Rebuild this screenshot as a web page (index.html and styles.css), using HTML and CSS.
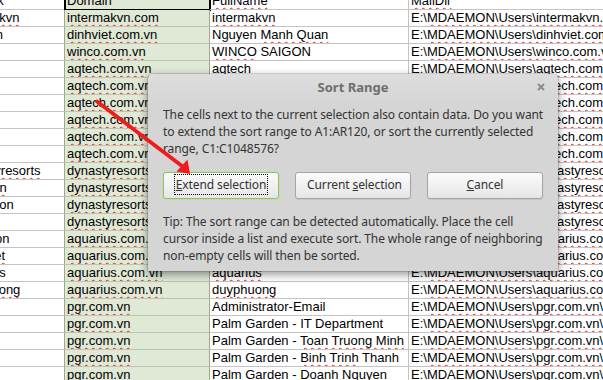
FILE: index.html
```html
<!DOCTYPE html>
<html lang="en">
<head>
    <meta charset="UTF-8">
    <title>Sort Range</title>
    <link rel="stylesheet" href="styles.css">
</head>
<body>
    <div class="sheet">
        <div class="cell a">Network</div><div class="cell b cur">Domain</div><div class="cell c"><span class="sp">FullName</span></div><div class="cell d"><span class="sp">MailDir</span></div>

        <div class="cell a"><span class="sp">intermakvn</span></div><div class="cell b"><span class="sp">intermakvn.com</span></div><div class="cell c"><span class="sp">intermakvn</span></div><div class="cell d">E:\<span class="sp">MDAEMON\Users\intermakvn.com\intermakvn\</span></div>
        <div class="cell a">nmquan</div><div class="cell b"><span class="sp">dinhviet.com.vn</span></div><div class="cell c">Nguyen <span class="sp">Manh Quan</span></div><div class="cell d">E:\<span class="sp">MDAEMON\Users\dinhviet.com.vn\nmquan\</span></div>
        <div class="cell a"></div><div class="cell b"><span class="sp">winco.com.vn</span></div><div class="cell c"><span class="sp">WINCO</span> SAIGON</div><div class="cell d">E:\<span class="sp">MDAEMON\Users\winco.com.vn\winco\</span></div>
        <div class="cell a"></div><div class="cell b"><span class="sp">aqtech.com.vn</span></div><div class="cell c"><span class="sp">aqtech</span></div><div class="cell d">E:\<span class="sp">MDAEMON\Users\aqtech.com.vn\aqtech\</span></div>
        <div class="cell a"></div><div class="cell b"><span class="sp">aqtech.com.vn</span></div><div class="cell c">Sales</div><div class="cell d">E:\<span class="sp">MDAEMON\Users\aqtech.com.vn\sales\</span></div>
        <div class="cell a"></div><div class="cell b"><span class="sp">aqtech.com.vn</span></div><div class="cell c">Support</div><div class="cell d">E:\<span class="sp">MDAEMON\Users\aqtech.com.vn\support\</span></div>
        <div class="cell a"></div><div class="cell b"><span class="sp">aqtech.com.vn</span></div><div class="cell c">Accounting</div><div class="cell d">E:\<span class="sp">MDAEMON\Users\aqtech.com.vn\ketoan\</span></div>
        <div class="cell a"></div><div class="cell b"><span class="sp">aqtech.com.vn</span></div><div class="cell c">Info</div><div class="cell d">E:\<span class="sp">MDAEMON\Users\aqtech.com.vn\info\</span></div>
        <div class="cell a"></div><div class="cell b"><span class="sp">aqtech.com.vn</span></div><div class="cell c">Admin</div><div class="cell d">E:\<span class="sp">MDAEMON\Users\aqtech.com.vn\admin\</span></div>
        <div class="cell a"><span class="sp">dynastyresorts</span></div><div class="cell b"><span class="sp">dynastyresorts.com</span></div><div class="cell c">Dynasty Resorts</div><div class="cell d">E:\<span class="sp">MDAEMON\Users\dynastyresorts.com\dynastyresorts\</span></div>
        <div class="cell a"><span class="sp">duongan</span></div><div class="cell b"><span class="sp">dynastyresorts.com</span></div><div class="cell c">Duong An</div><div class="cell d">E:\<span class="sp">MDAEMON\Users\dynastyresorts.com\duongan\</span></div>
        <div class="cell a">promotion</div><div class="cell b"><span class="sp">dynastyresorts.com</span></div><div class="cell c">Promotion</div><div class="cell d">E:\<span class="sp">MDAEMON\Users\dynastyresorts.com\promotion\</span></div>
        <div class="cell a"></div><div class="cell b"><span class="sp">dynastyresorts.com</span></div><div class="cell c">Sales</div><div class="cell d">E:\<span class="sp">MDAEMON\Users\dynastyresorts.com\sales\</span></div>
        <div class="cell a">reception</div><div class="cell b"><span class="sp">aquarius.com.vn</span></div><div class="cell c">Reception</div><div class="cell d">E:\<span class="sp">MDAEMON\Users\aquarius.com.vn\reception\</span></div>
        <div class="cell a"><span class="sp">dungviet</span></div><div class="cell b"><span class="sp">aquarius.com.vn</span></div><div class="cell c">Dung Viet</div><div class="cell d">E:\<span class="sp">MDAEMON\Users\aquarius.com.vn\dungviet\</span></div>
        <div class="cell a">aquarius</div><div class="cell b"><span class="sp">aquarius.com.vn</span></div><div class="cell c"><span class="sp">aquarius</span></div><div class="cell d">E:\<span class="sp">MDAEMON\Users\aquarius.com.vn\aquarius\</span></div>
        <div class="cell a"><span class="sp">duyphuong</span></div><div class="cell b"><span class="sp">aquarius.com.vn</span></div><div class="cell c"><span class="sp">duyphuong</span></div><div class="cell d">E:\<span class="sp">MDAEMON\Users\aquarius.com.vn\duyphuong\</span></div>
        <div class="cell a"></div><div class="cell b"><span class="sp">pgr.com.vn</span></div><div class="cell c">Administrator-Email</div><div class="cell d">E:\<span class="sp">MDAEMON\Users\pgr.com.vn\</span>admin\</div>
        <div class="cell a"></div><div class="cell b"><span class="sp">pgr.com.vn</span></div><div class="cell c">Palm Garden - IT Department</div><div class="cell d">E:\<span class="sp">MDAEMON\Users\pgr.com.vn\</span>it\</div>
        <div class="cell a"></div><div class="cell b"><span class="sp">pgr.com.vn</span></div><div class="cell c">Palm Garden - <span class="sp">Toan Truong Minh</span></div><div class="cell d">E:\<span class="sp">MDAEMON\Users\pgr.com.vn\</span>toan\</div>
        <div class="cell a"></div><div class="cell b"><span class="sp">pgr.com.vn</span></div><div class="cell c">Palm Garden - <span class="sp">Binh Trinh</span> Thanh</div><div class="cell d">E:\<span class="sp">MDAEMON\Users\pgr.com.vn\</span>binh\</div>
        <div class="cell a"></div><div class="cell b"><span class="sp">pgr.com.vn</span></div><div class="cell c">Palm Garden - <span class="sp">Doanh</span> Nguyen</div><div class="cell d">E:\<span class="sp">MDAEMON\Users\pgr.com.vn\</span>doanh\</div>
    </div>

    <div class="dialog">
        <div class="titlebar">
            <span></span>
            <span class="title">Sort Range</span>
            <svg class="close" viewBox="0 0 8 8"><path d="M1 1L7 7M7 1L1 7" stroke="#8c8c8c" stroke-width="2"/></svg>
        </div>
        <div class="content">
            <p class="msg">The cells next to the current selection also contain data. Do you want<br>to extend the sort range to A1:AR120, or sort the currently selected<br>range, C1:C1048576?</p>
            <div class="buttons">
                <button class="btn focus"><span class="ring"><u>E</u>xtend selection</span></button>
                <button class="btn"><span class="ring">Current <u>s</u>election</span></button>
                <button class="btn"><span class="ring"><u>C</u>ancel</span></button>
            </div>
            <p class="tip">Tip: The sort range can be detected automatically. Place the cell<br>cursor inside a list and execute sort. The whole range of neighboring<br>non-empty cells will then be sorted.</p>
        </div>
    </div>

    <svg class="arrow" viewBox="0 0 603 380">
        <line x1="97" y1="101.5" x2="182" y2="166" stroke="#f21b1b" stroke-width="3.8" stroke-linecap="round"/>
        <polygon points="190,174 176.5,171.5 187.5,159.5" fill="#f21b1b"/>
    </svg>
</body>
</html>
```

FILE: styles.css
```css
* {
    margin: 0;
    padding: 0;
    box-sizing: border-box;
}

body {
    width: 603px;
    height: 380px;
    overflow: hidden;
    position: relative;
    background: #fff;
    font-family: "Liberation Sans", Arial, sans-serif;
    font-size: 13px;
    color: #000;
}

/* spreadsheet */
.sheet {
    display: grid;
    grid-template-columns: 111px 145px 199px 340px;
    grid-auto-rows: 17px;
    margin: -7px 0 0 -46px;
}

.cell {
    border-right: 1px solid #c4c4c4;
    border-bottom: 1px solid #c4c4c4;
    padding-left: 2px;
    line-height: 16px;
    white-space: nowrap;
    overflow: hidden;
}

.a {
    border-right-color: #9cab8c;
}

.b {
    background: #e0e8d6;
    border-right-color: #9cab8c;
    border-bottom-color: #bcc4b2;
}

.cur {
    outline: 2px solid #000;
    outline-offset: -1px;
}

.sp {
    text-decoration: underline wavy #e8231d;
    text-decoration-thickness: 1px;
    text-underline-offset: 2px;
    text-decoration-skip-ink: none;
}

/* dialog */
.dialog {
    position: absolute;
    left: 148px;
    top: 74px;
    width: 410px;
    height: 197px;
    background: #d5d5d5;
    border-radius: 5px 5px 0 0;
    box-shadow: 0 0 0 1px rgba(0, 0, 0, .12), 0 3px 10px rgba(0, 0, 0, .45);
    font-family: "Noto Sans", sans-serif;
    font-size: 12px;
    letter-spacing: -0.1px;
    color: #333;
}

.titlebar {
    height: 32px;
    padding: 5px 13px 0;
    display: grid;
    grid-template-columns: 1fr auto 1fr;
    background: linear-gradient(#dddddd, #d5d5d5);
    border-radius: 5px 5px 0 0;
}

.title {
    font-size: 13px;
    font-weight: bold;
    line-height: 17px;
    letter-spacing: 0;
    color: #6e6e6e;
}

.close {
    justify-self: end;
    width: 8px;
    height: 8px;
    margin-top: 4px;
}

.content {
    padding: 0 15px;
}

.msg,
.tip {
    line-height: 17px;
    white-space: nowrap;
}

.buttons {
    display: flex;
    gap: 16px;
    margin-top: 15px;
}

.btn {
    width: 116px;
    height: 27px;
    display: flex;
    padding: 1px 10px 3px;
    border: 1px solid #a5a5a5;
    border-radius: 3px;
    background: linear-gradient(#fbfbfb, #e6e6e6);
    box-shadow: 0 1px 1px rgba(0, 0, 0, .08);
    font-family: "Noto Sans", sans-serif;
    font-size: 12px;
    letter-spacing: -0.1px;
    color: #333;
}

.ring {
    flex: 1;
    display: block;
    text-align: center;
    line-height: 19px;
    white-space: nowrap;
    border: 1px dotted transparent;
}

.btn.focus {
    border-color: #93bf73;
    box-shadow: 0 0 0 1px #c2dcae;
}

.btn.focus .ring {
    border-color: #000;
}

.tip {
    margin-top: 14px;
}

.arrow {
    position: absolute;
    left: 0;
    top: 0;
    width: 603px;
    height: 380px;
    pointer-events: none;
}
```
